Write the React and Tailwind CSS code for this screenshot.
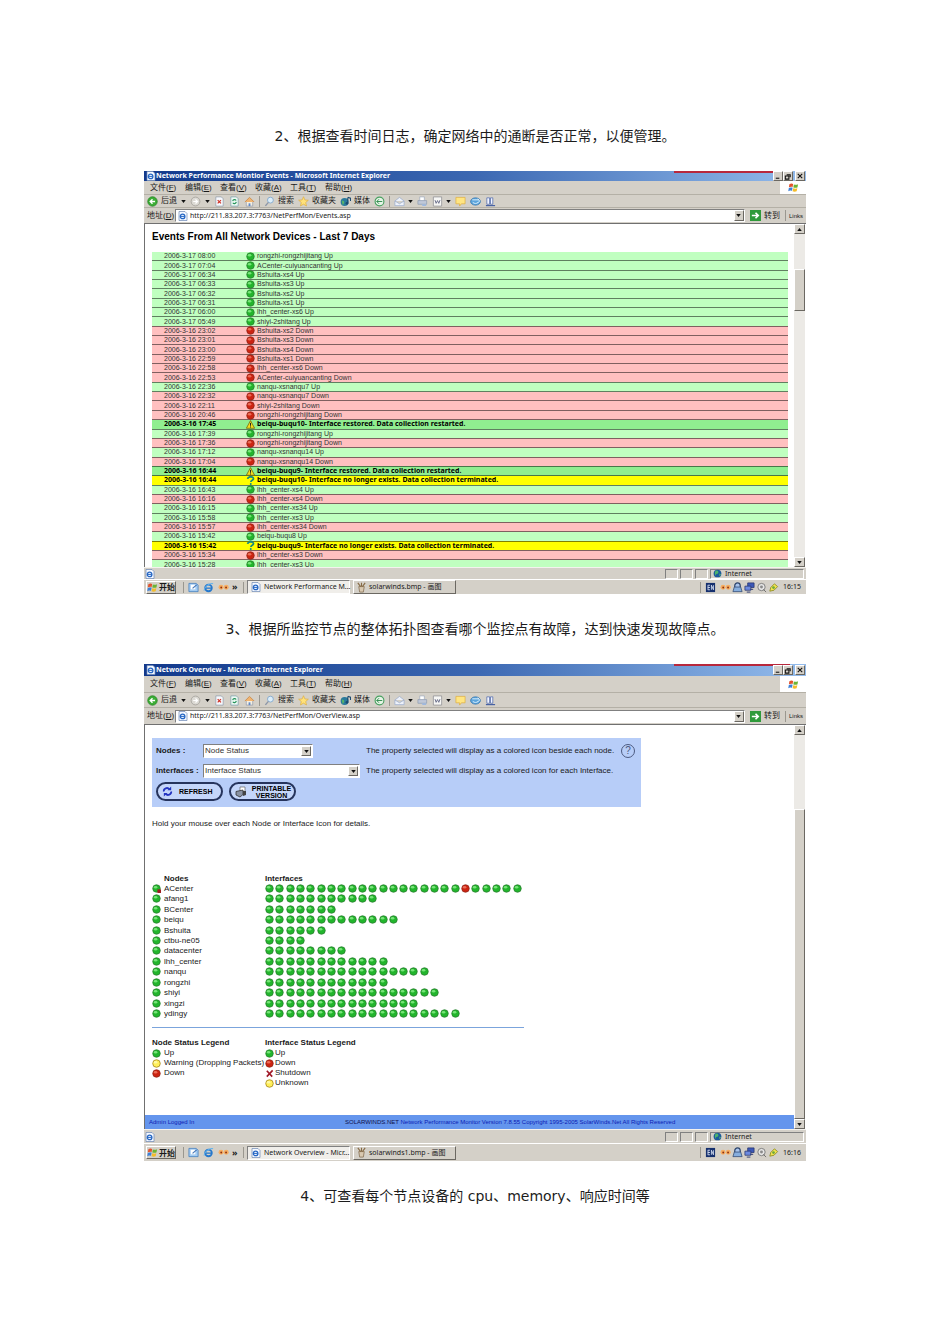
import clsx from "clsx";

const events = [
    ['2006-3-17 08:00', 'up', 'rongzhi-rongzhijitang Up'],
    ['2006-3-17 07:04', 'up', 'ACenter-cuiyuancanting Up'],
    ['2006-3-17 06:34', 'up', 'Bshuita-xs4 Up'],
    ['2006-3-17 06:33', 'up', 'Bshuita-xs3 Up'],
    ['2006-3-17 06:32', 'up', 'Bshuita-xs2 Up'],
    ['2006-3-17 06:31', 'up', 'Bshuita-xs1 Up'],
    ['2006-3-17 06:00', 'up', 'lhh_center-xs6 Up'],
    ['2006-3-17 05:49', 'up', 'shiyi-2shitang Up'],
    ['2006-3-16 23:02', 'down', 'Bshuita-xs2 Down'],
    ['2006-3-16 23:01', 'down', 'Bshuita-xs3 Down'],
    ['2006-3-16 23:00', 'down', 'Bshuita-xs4 Down'],
    ['2006-3-16 22:59', 'down', 'Bshuita-xs1 Down'],
    ['2006-3-16 22:58', 'down', 'lhh_center-xs6 Down'],
    ['2006-3-16 22:53', 'down', 'ACenter-cuiyuancanting Down'],
    ['2006-3-16 22:36', 'up', 'nanqu-xsnanqu7 Up'],
    ['2006-3-16 22:32', 'down', 'nanqu-xsnanqu7 Down'],
    ['2006-3-16 22:11', 'down', 'shiyi-2shitang Down'],
    ['2006-3-16 20:46', 'down', 'rongzhi-rongzhijitang Down'],
    ['2006-3-16 17:45', 'restored', 'beiqu-buqu10- Interface restored. Data collection restarted.'],
    ['2006-3-16 17:39', 'up', 'rongzhi-rongzhijitang Up'],
    ['2006-3-16 17:36', 'down', 'rongzhi-rongzhijitang Down'],
    ['2006-3-16 17:12', 'up', 'nanqu-xsnanqu14 Up'],
    ['2006-3-16 17:04', 'down', 'nanqu-xsnanqu14 Down'],
    ['2006-3-16 16:44', 'restored', 'beiqu-buqu9- Interface restored. Data collection restarted.'],
    ['2006-3-16 16:44', 'missing', 'beiqu-buqu10- Interface no longer exists. Data collection terminated.'],
    ['2006-3-16 16:43', 'up', 'lhh_center-xs4 Up'],
    ['2006-3-16 16:16', 'down', 'lhh_center-xs4 Down'],
    ['2006-3-16 16:15', 'up', 'lhh_center-xs34 Up'],
    ['2006-3-16 15:58', 'up', 'lhh_center-xs3 Up'],
    ['2006-3-16 15:57', 'down', 'lhh_center-xs34 Down'],
    ['2006-3-16 15:42', 'up', 'beiqu-buqu8 Up'],
    ['2006-3-16 15:42', 'missing', 'beiqu-buqu9- Interface no longer exists. Data collection terminated.'],
    ['2006-3-16 15:34', 'down', 'lhh_center-xs3 Down'],
    ['2006-3-16 15:28', 'up', 'lhh_center-xs3 Up'],
];

const nodes = [
    { name: 'ACenter', count: 25, down: 19, alert: true },
    { name: 'afang1', count: 11 },
    { name: 'BCenter', count: 7 },
    { name: 'beiqu', count: 13 },
    { name: 'Bshuita', count: 6 },
    { name: 'ctbu-ne05', count: 4 },
    { name: 'datacenter', count: 8 },
    { name: 'lhh_center', count: 12 },
    { name: 'nanqu', count: 16 },
    { name: 'rongzhi', count: 12 },
    { name: 'shiyi', count: 17 },
    { name: 'xingzi', count: 15 },
    { name: 'ydingy', count: 19 },
];

const rowColor = {
    up: 'bg-[#c0ffc0]',
    down: 'bg-[#ffc0c0]',
    restored: "bg-[#90ee90] font-['Noto_Sans',sans-serif] font-bold text-black",
    missing: "bg-[#ffff00] font-['Noto_Sans',sans-serif] font-bold text-black",
};

const raised = 'border border-t-white border-l-white border-r-[#6b6862] border-b-[#6b6862] bg-[#d4d0c8]';
const sunken = 'border border-t-[#808080] border-l-[#808080] border-r-white border-b-white';

function Dot({ kind = 'up', alert }) {
    const fill = { up: '#22b52c', down: '#cc2412', unknown: '#ffef5a' }[kind];
    const edge = { up: '#2a7a30', down: '#8c2418', unknown: '#9a7a10' }[kind];
    const shine = { up: '#8df08c', down: '#f2806a', unknown: '#fffbb8' }[kind];
    return (
        <svg viewBox="0 0 10 10" className="block size-[9px] shrink-0">
            <circle cx="5" cy="5" r="4.2" fill={fill} stroke={edge} strokeWidth="0.8" />
            <ellipse cx="4" cy="3.6" rx="2" ry="1.4" fill={shine} opacity="0.8" />
            {alert && <path d="M6 6h4v4h-4z" fill="#a01c20" />}
        </svg>
    );
}

function EventIcon({ kind }) {
    if (kind === 'restored') {
        return (
            <svg viewBox="0 0 10 10" className="block size-[9px]">
                <path d="M5 .6 9.6 9.2H.4z" fill="#f4dc20" stroke="#6c5c00" strokeWidth="0.8" />
                <path d="M5 3.2v3.2M5 7.2v1.1" stroke="#222" strokeWidth="1.1" />
            </svg>
        );
    }
    if (kind === 'missing') {
        return (
            <svg viewBox="0 0 10 10" className="block size-[9px]">
                <path d="M1.8 3.2C2 .2 8.4 .2 8.3 3c0 1.8-2.9 1.7-2.9 3.6" fill="none" stroke="#178a80" strokeWidth="2" />
                <circle cx="5.3" cy="8.8" r="1.1" fill="#178a80" />
            </svg>
        );
    }
    return <Dot kind={kind} />;
}

function PageIcon() {
    return (
        <svg viewBox="0 0 10 10" className="size-[10px] shrink-0">
            <path d="M1 .5h6l2 2v7H1z" fill="#f4f8ff" stroke="#6b86b4" strokeWidth="0.7" />
            <circle cx="4.6" cy="5.4" r="2.3" fill="none" stroke="#2667c4" strokeWidth="1.3" />
            <path d="M2.5 5.4h4.3" stroke="#2667c4" />
        </svg>
    );
}

function Caret() {
    return (
        <svg viewBox="0 0 6 4" className="h-[3px] w-[5px] shrink-0">
            <path d="M0 0h6L3 4z" fill="#111" />
        </svg>
    );
}

function ArrowButton({ up, label, className }) {
    return (
        <button aria-label={label} className={clsx('flex shrink-0 items-center justify-center', raised, className)}>
            <svg viewBox="0 0 6 4" className="h-[3px] w-[5px]">
                <path d={up ? 'M0 4h6L3 0z' : 'M0 0h6L3 4z'} fill="#111" />
            </svg>
        </button>
    );
}

const toolIcons = {
    back: (
        <>
            <circle cx="6" cy="6" r="5.2" fill="#3bad35" stroke="#1d7a1c" strokeWidth="0.7" />
            <path d="M8.8 6H4M6 3.5 3.5 6 6 8.5" stroke="#fff" strokeWidth="1.5" fill="none" />
        </>
    ),
    forward: (
        <>
            <circle cx="6" cy="6" r="4.8" fill="#dcdad4" stroke="#9c9a94" strokeWidth="0.8" />
            <path d="M3.5 6H8M6 3.8 8.2 6 6 8.2" stroke="#fff" strokeWidth="1.3" fill="none" />
        </>
    ),
    stop: (
        <>
            <path d="M2 1h6l2 2v8H2z" fill="#f6f8fc" stroke="#8794a8" strokeWidth="0.7" />
            <path d="m4 4.500 3.600 3.600M7.600 4.500 4 8.100" stroke="#d03428" strokeWidth="1.3" />
        </>
    ),
    refresh: (
        <>
            <path d="M2 1h6l2 2v8H2z" fill="#eefaf4" stroke="#6d96a8" strokeWidth="0.7" />
            <path d="M4 5.5C4.5 3.5 7 3.5 7.8 5M8 6.5C7.5 8.8 5 8.8 4.2 7.3" stroke="#24935a" strokeWidth="1.2" fill="none" />
        </>
    ),
    home: (
        <>
            <path d="M2.5 6v5h7V6" fill="#f5efe0" stroke="#8891a8" strokeWidth="0.7" />
            <path d="M1 6.5 6 1.5l5 5" fill="#f0b470" stroke="#c88848" strokeWidth="0.9" />
            <path d="M5 11V8h2v3" fill="#6189c8" />
        </>
    ),
    search: (
        <>
            <circle cx="7" cy="4.5" r="3.2" fill="#dceefa" stroke="#84a8cc" />
            <path d="M4.8 7 1.5 10.8" stroke="#8c96a8" strokeWidth="1.5" />
        </>
    ),
    star: <path d="m6 .8 1.500 3.500 3.800.3-2.900 2.500.9 3.800L6 8.900l-3.300 2 .9-3.800L.7 4.600l3.800-.3z" fill="#ffe27a" stroke="#dcab3a" strokeWidth="0.7" />,
    media: (
        <>
            <circle cx="5" cy="6.5" r="4.3" fill="#2a7a9c" />
            <path d="M2 5c2 0 3 1 2.5 2.5S3 9.5 2.8 9.5" fill="#58b668" />
            <path d="m8.500 1.500 3 1v3M8.500 1.500v6" stroke="#1a4a70" strokeWidth="1.2" fill="none" />
            <circle cx="7.6" cy="8" r="1.5" fill="#1a4a70" />
        </>
    ),
    history: (
        <>
            <circle cx="6" cy="6" r="4.8" fill="#e6f4e6" stroke="#48a060" strokeWidth="1.2" />
            <path d="M3 6h6M5.5 3.5 3 6l2.500 2.500" stroke="#2c8a4a" fill="none" />
        </>
    ),
    mail: <path d="M1 5.5 6 1.5l5 4v5H1zM1 5.5l5 3 5-3" fill="#eef2fa" stroke="#9aabcc" strokeWidth="0.8" />,
    print: (
        <>
            <path d="M3 5V1h5v4" fill="#fff" stroke="#96a4ba" strokeWidth="0.7" />
            <path d="M1 5h9.5v4H1z" fill="#bfc8d8" stroke="#8896ae" strokeWidth="0.7" />
            <path d="M5 9h5v2H6z" fill="#9eb8e0" />
        </>
    ),
    word: (
        <>
            <path d="M1.5 1h9v10h-9z" fill="#f6f6f4" stroke="#8c8c90" strokeWidth="0.8" />
            <path d="m3.300 4.500 1.200 3.500L6 5l1.400 3 1.300-3.500" stroke="#666a88" fill="none" />
        </>
    ),
    note: <path d="M1 1.5h10v7H7L5 11V8.500H1z" fill="#ffe582" stroke="#e0b040" strokeWidth="0.8" />,
    globe: (
        <>
            <ellipse cx="6" cy="6" rx="5.4" ry="4" fill="#5ca5dc" stroke="#2c6ea8" strokeWidth="0.7" />
            <path d="M2.5 4.2h7M3 7c2 1.5 4 1.5 6 0M8.5 3l2 2.5-2 2" stroke="#e4f4ff" fill="none" />
        </>
    ),
    research: (
        <>
            <path d="M2 2h3v7H2zM6 2h2.5v7H6z" fill="#f2f5ff" stroke="#4c66a8" strokeWidth="0.8" />
            <path d="M1 10.5h10" stroke="#3c58a0" strokeWidth="1.2" />
        </>
    ),
    people: (
        <>
            <circle cx="3.3" cy="5.8" r="2.7" fill="#f6ae62" />
            <circle cx="9" cy="5.8" r="2.7" fill="#f6ae62" />
            <circle cx="3.5" cy="6" r="1" fill="#8c2f10" />
            <circle cx="8.8" cy="6" r="1" fill="#8c2f10" />
        </>
    ),
    ie: (
        <>
            <circle cx="6" cy="6.5" r="3.6" fill="none" stroke="#2678cc" strokeWidth="2" />
            <path d="M3 6.7h6.5" stroke="#2678cc" strokeWidth="1.4" />
            <path d="M1 9.5C2 4.5 7 1 11 1.8" stroke="#62b2ec" strokeWidth="1.1" fill="none" />
        </>
    ),
    desktop: (
        <>
            <path d="M1 1.5h8l2 2v7H1z" fill="#a4ccf2" stroke="#3c78bc" strokeWidth="0.8" />
            <path d="M3 3h5v5H3z" fill="#fff" />
            <path d="m5 7 4.500-4" stroke="#4878b8" strokeWidth="1.2" />
        </>
    ),
    paint: (
        <>
            <path d="M3 5h6l-1 6H4z" fill="#d8c8b0" stroke="#80684c" strokeWidth="0.8" />
            <path d="M5 5 2 1M6 5V.8M7 5l3-4" stroke="#866a44" strokeWidth="1.2" />
        </>
    ),
    lang: (
        <>
            <path d="M1 1h10v10H1z" fill="#16306e" />
            <path d="M3 3.5h2.5M3 6h2.5M3 8.5h2.5M3.3 3.5v5M7 8.5v-5l2.2 5v-5" stroke="#dbe4f6" strokeWidth="0.9" fill="none" />
        </>
    ),
    lock: (
        <>
            <path d="M3 6V4a3 3 0 0 1 6 0v2" stroke="#2c446c" strokeWidth="1.3" fill="#a8c4ec" />
            <path d="M1 10.5 2.5 5.5h7l1.5 5z" fill="#86aede" stroke="#2c446c" strokeWidth="0.8" />
        </>
    ),
    monitors: (
        <>
            <path d="M4 1h7v5H4z" fill="#3c58b8" stroke="#26346c" strokeWidth="0.8" />
            <path d="M1 4.5h6.5V9H1z" fill="#6c8ae0" stroke="#26346c" strokeWidth="0.8" />
            <path d="M3 11h4M7 8h3" stroke="#26346c" />
        </>
    ),
    speaker: (
        <>
            <circle cx="6" cy="5.5" r="4" fill="#e6e6e6" stroke="#7a7a7a" />
            <circle cx="6" cy="5.5" r="1.6" fill="#8a8a8a" />
            <path d="m8 8 3 3" stroke="#6a6a6a" />
        </>
    ),
    pen: (
        <>
            <path d="m2 10 1-4 4-4 3.500 3-4 4z" fill="#f2e450" stroke="#8a8820" strokeWidth="0.9" />
            <circle cx="6" cy="6" r="1.5" fill="#6ca83c" />
        </>
    ),
    flag: (
        <>
            <path d="M1.5 2.5C3 1.5 4.5 1.6 5.6 2.3L5 5.6C4 5 2.5 5 1 5.8z" fill="#e2522c" />
            <path d="M6.4 2.6C8 3.3 9.5 3.2 11 2.5l-.7 3.4c-1.5.7-3 .6-4.5 0z" fill="#6cb434" />
            <path d="M.9 6.6C2.4 5.8 3.8 5.8 5 6.4l-.7 3.4C3.2 9.2 1.7 9.2.3 10z" fill="#3c80d8" />
            <path d="M5.7 6.8c1.5.6 3 .7 4.5 0l-.8 3.4c-1.5.7-3 .6-4.4 0z" fill="#f4bc2a" />
        </>
    ),
};

function Icon({ name, className }) {
    return (
        <svg viewBox="0 0 12 12" className={clsx('size-[11px] shrink-0', className)}>
            {toolIcons[name]}
        </svg>
    );
}

function Separator() {
    return <span className="h-[11px] w-px shrink-0 border-l border-[#9a978f]" />;
}

function ToolButton({ icon, label, caret }) {
    return (
        <button className="flex items-center gap-[3px]">
            <Icon name={icon} />
            {label && <span>{label}</span>}
            {caret && <Caret />}
        </button>
    );
}

function TitleBar({ title, tall }) {
    return (
        <header className={clsx('relative flex items-center bg-linear-to-r from-[#12398c] via-[#3c68b2] to-[#94bcec] pl-[2px]', tall ? 'h-[12px]' : 'h-[10px]')}>
            <PageIcon />
            <h2 className="grow whitespace-nowrap font-['Noto_Sans',sans-serif] text-[7px] leading-[10px] font-bold text-white">{title}</h2>
            <span className="absolute top-0 right-[16px] h-[2px] w-[116px] bg-[#b8283c]" />
            <div className="relative flex items-center pr-px">
                {[
                    ['Minimize', 'M2 7h4'],
                    ['Restore', 'M3 3h4v3M1.5 4.5h4V8h-4z'],
                    ['Close', 'm2 2 5 5M7 2 2 7'],
                ].map(([label, d]) => (
                    <button key={label} aria-label={label} className={clsx('size-[10px] last:ml-[2px]', raised)}>
                        <svg viewBox="0 0 9 9" className="size-[8px]">
                            <path d={d} stroke="#111" strokeWidth="1.2" fill="none" />
                        </svg>
                    </button>
                ))}
            </div>
        </header>
    );
}

function Toolbars({ id, url, tall }) {
    const menus = [['文件', 'F'], ['编辑', 'E'], ['查看', 'V'], ['收藏', 'A'], ['工具', 'T'], ['帮助', 'H']];
    return (
        <>
            <nav className={clsx('flex items-center border-b border-[#b4b0a6] pl-[6px]', tall ? 'h-[17px]' : 'h-[14px]')}>
                {menus.map(([name, key]) => (
                    <button key={key} className="w-[35px] text-left whitespace-nowrap">
                        {name}(<u>{key}</u>)
                    </button>
                ))}
                <span className="ml-auto flex h-full w-[26px] items-center justify-center bg-white">
                    <Icon name="flag" />
                </span>
            </nav>
            <div className={clsx('flex items-center gap-[4px] border-b border-[#b4b0a6] pl-[3px] whitespace-nowrap', tall ? 'h-[15px]' : 'h-[13px]')}>
                <ToolButton icon="back" label="后退" />
                <Caret />
                <ToolButton icon="forward" />
                <Caret />
                <ToolButton icon="stop" />
                <ToolButton icon="refresh" />
                <ToolButton icon="home" />
                <Separator />
                <ToolButton icon="search" label="搜索" />
                <ToolButton icon="star" label="收藏夹" />
                <ToolButton icon="media" label="媒体" />
                <ToolButton icon="history" />
                <Separator />
                <ToolButton icon="mail" caret />
                <ToolButton icon="print" />
                <ToolButton icon="word" caret />
                <ToolButton icon="note" />
                <ToolButton icon="globe" />
                <ToolButton icon="research" />
            </div>
            <div className={clsx('flex items-center pl-[3px]', tall ? 'h-[16px]' : 'h-[15px]')}>
                <label htmlFor={id} className="w-[28px] whitespace-nowrap">地址(<u>D</u>)</label>
                <div className={clsx('flex h-[13px] grow items-center gap-[2px] bg-white pl-[2px]', sunken)}>
                    <PageIcon />
                    <input id={id} defaultValue={url} className="min-w-0 grow bg-transparent font-['Noto_Sans',sans-serif] text-[7px] leading-[10px] outline-none" />
                    <ArrowButton label="Address list" className="h-[11px] w-[10px]" />
                </div>
                <button className="flex items-center gap-[3px] px-[5px]">
                    <svg viewBox="0 0 12 12" className="size-[11px]">
                        <path d="M0 0h12v12H0z" fill="#2f9a3a" />
                        <path d="M2 6h7M6 3l3 3-3 3" stroke="#fff" strokeWidth="1.8" fill="none" />
                    </svg>
                    转到
                </button>
                <Separator />
                <a href="#links" className="px-[3px] text-[6px]">Links</a>
            </div>
        </>
    );
}

function StatusBar({ tall }) {
    return (
        <div className={clsx('flex items-center gap-[2px] border-t border-[#f4f2ee] pr-[2px]', tall ? 'h-[14px]' : 'h-[12px]')}>
            <span className="grow pl-px"><PageIcon /></span>
            {[0, 1, 2].map((n) => (
                <span key={n} className={clsx('h-[10px] w-[13px]', sunken)} />
            ))}
            <span className={clsx("flex h-[10px] w-[94px] items-center gap-[3px] pl-[2px] font-['Noto_Sans',sans-serif] text-[7px]", sunken)}>
                <svg viewBox="0 0 10 10" className="size-[9px]">
                    <circle cx="5" cy="5" r="4.3" fill="#1c5a9c" />
                    <path d="M3 2c2-1 3 0 3 2S3 5 3 7 1 4 3 2M7 5l2 1-2 2z" fill="#4cb46c" />
                </svg>
                Internet
            </span>
        </div>
    );
}

function TaskBar({ active, other, time, tall }) {
    return (
        <div className={clsx("flex items-center border-t border-white font-['Noto_Sans','Noto_Sans_CJK_SC',sans-serif] text-[7px] whitespace-nowrap", tall ? 'h-[18px]' : 'h-[15px]')}>
            <button className={clsx('ml-[2px] flex h-[13px] w-[30px] items-center gap-px text-[8px] font-bold', raised)}>
                <Icon name="flag" />开始
            </button>
            <div className="flex w-[56px] items-center gap-[4px] pl-[7px]">
                <Separator />
                <Icon name="desktop" />
                <Icon name="ie" />
                <Icon name="people" />
            </div>
            <span className="w-[11px] text-[9px] leading-[10px] font-bold">»</span>
            <Separator />
            <button className={clsx('ml-[3px] flex h-[14px] w-[103px] items-center gap-[3px] bg-[#f0eeea] pl-[3px]', sunken)}>
                <PageIcon />{active}
            </button>
            <button className={clsx('ml-[3px] flex h-[14px] w-[103px] items-center gap-[2px] pl-[2px]', raised)}>
                <Icon name="paint" />{other}
            </button>
            <div className="ml-auto flex items-center gap-px pr-[5px]">
                <Separator />
                <Icon name="lang" className="mx-[3px]" />
                <Icon name="people" />
                <Icon name="lock" />
                <Icon name="monitors" />
                <Icon name="speaker" />
                <Icon name="pen" />
                <span className="pl-[3px]">{time}</span>
            </div>
        </div>
    );
}

function ScrollBar({ thumb }) {
    return (
        <div className="flex w-[11px] shrink-0 flex-col bg-[#eceae6]">
            <ArrowButton up label="Scroll up" className="h-[10px]" />
            <div className="flex grow flex-col">
                <div className={clsx('w-full', raised, thumb)} />
            </div>
            <ArrowButton label="Scroll down" className="h-[10px]" />
        </div>
    );
}

function Browser({ id, title, url, active, other, time, tall, thumb, children }) {
    return (
        <section className="w-full bg-[#d4d0c8] font-['Liberation_Sans','Noto_Sans_CJK_SC',sans-serif] text-[8px] leading-[10px] text-[#1a1a1a]">
            <TitleBar title={title} tall={tall} />
            <Toolbars id={id} url={url} tall={tall} />
            <div className={clsx('flex border-t border-l border-[#707070] bg-white pr-px', tall ? 'h-[405px]' : 'h-[344px]')}>
                <div className="flex min-w-0 grow flex-col overflow-hidden">{children}</div>
                <ScrollBar thumb={thumb} />
            </div>
            <StatusBar tall={tall} />
            <TaskBar active={active} other={other} time={time} tall={tall} />
        </section>
    );
}

function EventsPage() {
    return (
        <div className="pt-[6px] pr-[6px] pl-[7px]">
            <h3 className="text-[10px] leading-[14px] font-bold text-black">Events From All Network Devices - Last 7 Days</h3>
            <table className="mt-[8px] h-[318px] w-full border-collapse text-[7px] leading-[8px] text-[#333]">
                <tbody>
                    {events.map(([time, kind, text], index) => (
                        <tr key={index} className={clsx('border-b border-black/50', rowColor[kind])}>
                            <td className="w-[94px] p-0 pl-[12px] whitespace-nowrap">{time}</td>
                            <td className="w-[11px] p-0">
                                <div className="flex h-[8px] items-center"><EventIcon kind={kind} /></div>
                            </td>
                            <td className="p-0 whitespace-nowrap">{text}</td>
                        </tr>
                    ))}
                </tbody>
            </table>
        </div>
    );
}

function Select({ id, value, className }) {
    return (
        <div className={clsx('relative', className)}>
            <select id={id} className={clsx('block h-[14px] w-full appearance-none bg-white pl-px text-[8px] leading-[10px] text-[#333]', sunken)}>
                <option>{value}</option>
            </select>
            <span className={clsx('pointer-events-none absolute top-[2px] right-[2px] flex size-[10px] items-center justify-center', raised)}>
                <Caret />
            </span>
        </div>
    );
}

function OverviewPage() {
    const pill = 'flex h-[19px] w-[67px] items-center rounded-full border-2 border-[#26345c] bg-[#c4d6fa] pl-[4px] text-[7px] leading-[7px] font-bold text-black';
    return (
        <>
            <div className="mt-[13px] ml-[7px] w-[489px] bg-[#b7cdf8] px-[4px] py-[6px]">
                <div className="grid grid-cols-[47px_163px_1fr_auto] items-center gap-y-[6px]">
                    <label htmlFor="nodes" className="font-bold">Nodes :</label>
                    <Select id="nodes" value="Node Status" className="w-[110px]" />
                    <p className="whitespace-nowrap">The property selected will display as a colored icon beside each node.</p>
                    <button aria-label="Help" className="mr-[2px] size-[14px] rounded-full border border-[#4c5a80] text-[10px] leading-[12px] text-[#4c5a80]">?</button>
                    <label htmlFor="interfaces" className="font-bold whitespace-nowrap">Interfaces :</label>
                    <Select id="interfaces" value="Interface Status" className="w-[157px]" />
                    <p className="col-span-2 whitespace-nowrap">The property selected will display as a colored icon for each Interface.</p>
                </div>
                <div className="mt-[4px] flex gap-[6px]">
                    <button className={clsx(pill, 'gap-[6px]')}>
                        <svg viewBox="0 0 12 12" className="size-[11px]">
                            <path d="M2 6C1.5 2.5 6 1 8 3.5M10 6c.5 3.5-4 5-6 2.5" stroke="#2434c0" strokeWidth="2" fill="none" />
                            <path d="M6 4.5h4v-4zM6 7.5H2v4z" fill="#2434c0" />
                        </svg>
                        REFRESH
                    </button>
                    <button className={clsx(pill, 'gap-[2px]')}>
                        <svg viewBox="0 0 12 12" className="size-[12px] shrink-0">
                            <path d="M5 1h5v6H5z" fill="#fff" stroke="#666" strokeWidth="0.7" />
                            <path d="M1 5.5 8 4v4.5L5 11 1 9z" fill="#8a93a4" stroke="#333" strokeWidth="0.8" />
                            <path d="M8 5h3v4l-3 1z" fill="#444" />
                        </svg>
                        <span>PRINTABLE VERSION</span>
                    </button>
                </div>
            </div>
            <p className="mt-[11px] ml-[7px] leading-[12px]">Hold your mouse over each Node or Interface Icon for details.</p>
            <table className="mt-[44px] ml-[7px] h-[145px] w-[371px] border-collapse text-left">
                <thead>
                    <tr className="leading-[9px]">
                        <th className="w-[113px] p-0 pl-[12px]">Nodes</th>
                        <th className="p-0">Interfaces</th>
                    </tr>
                </thead>
                <tbody>
                    {nodes.map((node) => (
                        <tr key={node.name} className="leading-[9px]">
                            <td className="p-0">
                                <div className="flex items-center gap-[3px]">
                                    <Dot alert={node.alert} />
                                    {node.name}
                                </div>
                            </td>
                            <td className="p-0">
                                <div className="grid grid-cols-[repeat(25,minmax(0,1fr))]">
                                    {Array.from({ length: node.count }, (_, i) => (
                                        <Dot key={i} kind={i === node.down ? 'down' : 'up'} />
                                    ))}
                                </div>
                            </td>
                        </tr>
                    ))}
                </tbody>
            </table>
            <hr className="mt-[8px] ml-[7px] h-px w-[372px] shrink-0 border-0 bg-[#7ba4dc]" />
            <div className="mt-[10px] ml-[7px] grid grid-cols-[113px_1fr] whitespace-nowrap">
                <div>
                    <h4 className="font-bold">Node Status Legend</h4>
                    <ul>
                        <li className="flex items-center gap-[3px]"><Dot />Up</li>
                        <li className="flex items-center gap-[3px]"><Dot kind="unknown" />Warning (Dropping Packets)</li>
                        <li className="flex items-center gap-[3px]"><Dot kind="down" />Down</li>
                    </ul>
                </div>
                <div>
                    <h4 className="font-bold">Interface Status Legend</h4>
                    <ul>
                        <li className="flex items-center gap-px"><Dot />Up</li>
                        <li className="flex items-center gap-px"><Dot kind="down" />Down</li>
                        <li className="flex items-center gap-px">
                            <svg viewBox="0 0 10 10" className="size-[9px]">
                                <path d="m2 2 6 6.500M8.500 1.500 2 8.500" stroke="#a01828" strokeWidth="1.8" />
                            </svg>
                            Shutdown
                        </li>
                        <li className="flex items-center gap-px"><Dot kind="unknown" />Unknown</li>
                    </ul>
                </div>
            </div>
            <footer className="mt-auto flex h-[14px] shrink-0 items-center bg-[#6495ed] pl-[4px] text-[6px] whitespace-nowrap text-[#0c1cb4]">
                <span className="w-[196px]">Admin Logged In</span>
                <span><span className="text-[#10104c]">SOLARWINDS.NET</span> Network Performance Monitor Version 7.8.55 Copyright 1995-2005 SolarWinds.Net All Rights Reserved</span>
            </footer>
        </>
    );
}

export default function App() {
    const caption = "text-center text-[14px] leading-[20px] text-[#1c1c1c] font-['DejaVu_Sans','Noto_Sans_CJK_SC',sans-serif]";
    return (
        <main lang="zh-CN" className="min-h-screen bg-white pt-[126px] pb-[138px]">
            <div className="mx-auto flex max-w-[662px] flex-col gap-[25px]">
                <p className={caption}>2、根据查看时间日志，确定网络中的通断是否正常，以便管理。</p>
                <Browser
                    id="url-events"
                    title="Network Performance Montior Events - Microsoft Internet Explorer"
                    url="http://211.83.207.3:7763/NetPerfMon/Events.asp"
                    active="Network Performance M..."
                    other="solarwinds.bmp - 画图"
                    time="16:15"
                    thumb="mt-[35px] h-[42px]"
                >
                    <EventsPage />
                </Browser>
                <p className={caption}>3、根据所监控节点的整体拓扑图查看哪个监控点有故障，达到快速发现故障点。</p>
                <Browser
                    id="url-overview"
                    title="Network Overview - Microsoft Internet Explorer"
                    url="http://211.83.207.3:7763/NetPerfMon/OverView.asp"
                    active="Network Overview - Micr..."
                    other="solarwinds1.bmp - 画图"
                    time="16:16"
                    tall
                    thumb="mt-[74px] grow"
                >
                    <OverviewPage />
                </Browser>
                <p className={caption}>4、可查看每个节点设备的 cpu、memory、响应时间等</p>
            </div>
        </main>
    );
}
